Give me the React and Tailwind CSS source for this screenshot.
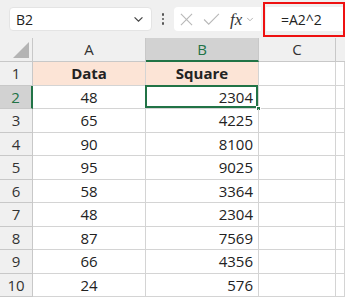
import React from 'react';

const rows = [
  [48, 2304],
  [65, 4225],
  [90, 8100],
  [95, 9025],
  [58, 3364],
  [48, 2304],
  [87, 7569],
  [66, 4356],
  [24, 576],
];

const font = { fontFamily: '"Open Sans", "Liberation Sans", sans-serif' };

const Chevron = ({ className }) => (
  <svg viewBox="0 0 12 8" className={className} fill="none" stroke="currentColor" strokeWidth="1.4">
    <path d="M1.5 1.5 L6 6 L10.5 1.5" />
  </svg>
);

const TopBar = () => (
  <div className="h-[38px] bg-[#f0f0f0] flex items-center relative">
    <div className="ml-[9px] w-[143px] h-[24px] bg-white rounded-[4px] border border-[#e4e4e4] flex items-center justify-between pl-[6px] pr-[7px]">
      <span className="text-[14px] text-[#222]">B2</span>
      <Chevron className="w-[11px] h-[7px] text-[#444]" />
    </div>
    <div className="w-[22px] flex flex-col items-center gap-[2px]">
      <span className="w-[2.5px] h-[2.5px] rounded-full bg-[#555]" />
      <span className="w-[2.5px] h-[2.5px] rounded-full bg-[#555]" />
      <span className="w-[2.5px] h-[2.5px] rounded-full bg-[#555]" />
    </div>
    <div className="w-[87px] h-[24px] bg-white rounded-l-[4px] flex items-center pl-[6px]">
      <svg viewBox="0 0 14 14" className="w-[13px] h-[13px]" fill="none" stroke="#b8b8b8" strokeWidth="1.2">
        <path d="M1 1 L13 13 M13 1 L1 13" />
      </svg>
      <svg viewBox="0 0 18 14" className="w-[17px] h-[13px] ml-[10px]" fill="none" stroke="#b8b8b8" strokeWidth="1.2">
        <path d="M1 7 L6 12 L17 1" />
      </svg>
      <span className="ml-[10px] text-[17px] italic text-[#333] leading-none" style={{ fontFamily: '"Liberation Serif", serif' }}>
        fx
      </span>
      <Chevron className="w-[8px] h-[5px] ml-[4px] text-[#aaa]" />
    </div>
    <div className="ml-[2px] w-[82px] h-[35px] border-2 border-[#e11] flex items-center bg-[#f0f0f0] pl-[1px]">
      <div className="h-[24px] flex-1 bg-white flex items-center pl-[15px] text-[14px] text-[#222]">=A2^2</div>
    </div>
  </div>
);

const Cell = ({ children, className = '' }) => (
  <div className={`border-r border-b border-[#d4d4d4] flex items-center ${className}`}>{children}</div>
);

export default function App() {
  return (
    <div className="w-[345px] h-[300px] bg-white overflow-hidden" style={font}>
      <TopBar />
      <div className="grid grid-cols-[33px_113px_113px_77px_1fr] grid-rows-[24px_repeat(10,23.5px)] text-[15px] text-[#222]">
        <div className="bg-[#f0f0f0] border-r border-b border-[#c8c8c8] flex items-end justify-end pr-[3px] pb-[3px]">
          <svg viewBox="0 0 16 16" className="w-[16px] h-[16px]">
            <path d="M16 0 L16 16 L0 16 Z" fill="#b4b4b4" />
          </svg>
        </div>
        <div className="bg-[#f0f0f0] border-r border-b border-[#c8c8c8] flex items-center justify-center text-[#333]">A</div>
        <div className="bg-[#d2d2d2] border-r border-[#c8c8c8] border-b-2 border-b-[#217346] flex items-center justify-center text-[#217346]">B</div>
        <div className="bg-[#f0f0f0] border-r border-b border-[#c8c8c8] flex items-center justify-center text-[#333]">C</div>
        <div className="bg-[#f0f0f0] border-b border-[#c8c8c8]" />

        <div className="bg-[#f0f0f0] border-r border-b border-[#c8c8c8] flex items-center justify-center text-[#333]">1</div>
        <Cell className="bg-[#fce4d6] justify-center font-bold">Data</Cell>
        <Cell className="bg-[#fce4d6] justify-center font-bold">Square</Cell>
        <Cell />
        <Cell />

        {rows.map(([a, b], i) => {
          const n = i + 2;
          const sel = n === 2;
          return (
            <React.Fragment key={n}>
              <div
                className={
                  sel
                    ? 'bg-[#d2d2d2] border-r-2 border-r-[#217346] border-b border-[#c8c8c8] flex items-center justify-center text-[#217346]'
                    : 'bg-[#f0f0f0] border-r border-b border-[#c8c8c8] flex items-center justify-center text-[#333]'
                }
              >
                {n}
              </div>
              <Cell className="justify-center">{a}</Cell>
              <Cell className="justify-end pr-[5px] relative">
                {b}
                {sel && (
                  <>
                    <div className="absolute -left-[1px] -top-[1px] -right-[0px] -bottom-[0px] border-2 border-[#217346]" />
                    <div className="absolute -right-[3px] -bottom-[3px] w-[5px] h-[5px] bg-[#217346] border border-white" />
                  </>
                )}
              </Cell>
              <Cell />
              <Cell />
            </React.Fragment>
          );
        })}
      </div>
    </div>
  );
}
